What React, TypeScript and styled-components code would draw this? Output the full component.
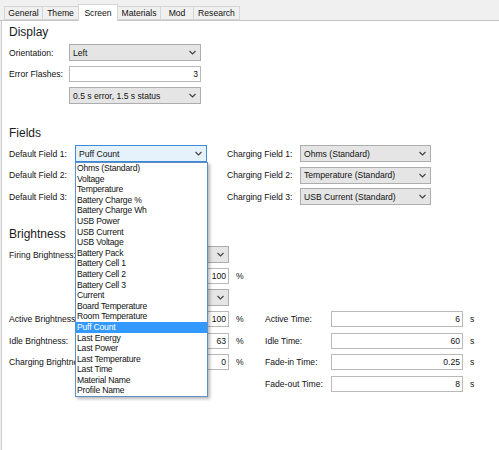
import React from "react";
import styled, { createGlobalStyle } from "styled-components";

const GlobalStyle = createGlobalStyle`
  html, body {
    margin: 0;
    padding: 0;
    background: #f0f0f0;
  }
  body {
    font-family: "Liberation Sans", Arial, sans-serif;
    font-size: 8.6px;
    color: #111;
  }
  * {
    box-sizing: border-box;
  }
`;

const Window = styled.div`
  width: 499px;
  height: 450px;
  display: flex;
  flex-direction: column;
  background: #f0f0f0;
  overflow: hidden;
`;

const TabStrip = styled.div`
  height: 21px;
  flex-shrink: 0;
  display: flex;
  align-items: flex-end;
  padding-left: 4px;
  border-bottom: 1px solid #c4c4c4;
`;

const Tab = styled.div<{ $w: number; $active?: boolean }>`
  position: relative;
  z-index: ${(p) => (p.$active ? 1 : 0)};
  width: ${(p) => p.$w}px;
  height: ${(p) => (p.$active ? 17 : 14)}px;
  margin-bottom: ${(p) => (p.$active ? -1 : 0)}px;
  margin-left: -1px;
  display: flex;
  align-items: center;
  justify-content: center;
  background: ${(p) => (p.$active ? "#fff" : "#f0f0f0")};
  border: 1px solid #d6d6d6;
  border-bottom: ${(p) => (p.$active ? "none" : "1px solid #d6d6d6")};
  white-space: nowrap;
  &:first-child {
    margin-left: 0;
  }
`;

const Panel = styled.div`
  flex: 1;
  margin-left: 1px;
  background: #fff;
  border-left: 1px solid #cdcdcd;
  padding: 4px 0 0 7px;
  display: flex;
  flex-direction: column;
  gap: 22px;
`;

const Section = styled.section`
  display: flex;
  flex-direction: column;
`;

const Heading = styled.div`
  font-size: 12px;
  line-height: 14px;
  height: 14px;
  margin-bottom: 5px;
  color: #1a1a1a;
`;

const Rows = styled.div`
  display: flex;
  flex-direction: column;
  gap: 4.5px;
`;

const FormRow = styled.div<{ $cols: string }>`
  display: grid;
  grid-template-columns: ${(p) => p.$cols};
  height: 17px;
  align-items: center;
`;

const Label = styled.div`
  white-space: nowrap;
  overflow: hidden;
`;

/* left brightness labels run under the open drop-down list */
const CutLabel = styled(Label)`
  max-width: 66px;
`;

const Unit = styled.div`
  padding-left: 7px;
`;

const ComboBox = styled.div<{ $focused?: boolean }>`
  position: relative;
  height: 17px;
  display: flex;
  align-items: center;
  justify-content: space-between;
  padding: 0 4px 0 3px;
  border: 1px solid ${(p) => (p.$focused ? "#3c8ad8" : "#adadad")};
  background: ${(p) => (p.$focused ? "#e5f1fb" : "#e5e5e5")};
  white-space: nowrap;
`;

const TextBox = styled.div`
  height: 16px;
  display: flex;
  align-items: center;
  justify-content: flex-end;
  padding-right: 2px;
  border: 1px solid #b9b9b9;
  background: #fff;
`;

const ListBox = styled.div`
  position: absolute;
  z-index: 10;
  top: calc(100% + 1px);
  left: -1px;
  width: 133px;
  background: #fff;
  border: 1px solid #5f8fc4;
  box-shadow: 2px 2px 3px rgba(0, 0, 0, 0.28);
`;

const ListItem = styled.div<{ $selected?: boolean }>`
  height: 10.6px;
  line-height: 10.6px;
  padding-left: 1px;
  letter-spacing: -0.2px;
  white-space: nowrap;
  background: ${(p) => (p.$selected ? "#3399ff" : "transparent")};
  color: ${(p) => (p.$selected ? "#fff" : "#111")};
`;

const Chevron = () => (
  <svg width="7" height="5" viewBox="0 0 7 5">
    <path d="M0.5 1 L3.5 4 L6.5 1" fill="none" stroke="#404040" strokeWidth="1.1" />
  </svg>
);

const Combo = ({ value, focused, children }: { value?: string; focused?: boolean; children?: React.ReactNode }) => (
  <ComboBox $focused={focused}>
    <span>{value}</span>
    <Chevron />
    {children}
  </ComboBox>
);

const tabs = [
  { name: "General", w: 39 },
  { name: "Theme", w: 37 },
  { name: "Screen", w: 40, active: true },
  { name: "Materials", w: 44 },
  { name: "Mod", w: 34 },
  { name: "Research", w: 47 },
];

const fieldOptions = [
  "Ohms (Standard)",
  "Voltage",
  "Temperature",
  "Battery Charge %",
  "Battery Charge Wh",
  "USB Power",
  "USB Current",
  "USB Voltage",
  "Battery Pack",
  "Battery Cell 1",
  "Battery Cell 2",
  "Battery Cell 3",
  "Current",
  "Board Temperature",
  "Room Temperature",
  "Puff Count",
  "Last Energy",
  "Last Power",
  "Last Temperature",
  "Last Time",
  "Material Name",
  "Profile Name",
];

const displayCols = "60px 132px";
const fieldCols = "66px 132px 20px 73px 131px";
const brightCols = "88px 132px 36px 66px 132px auto";

export default function App() {
  return (
    <>
      <GlobalStyle />
      <Window>
        <TabStrip>
          {tabs.map((t) => (
            <Tab key={t.name} $w={t.w} $active={t.active}>
              {t.name}
            </Tab>
          ))}
        </TabStrip>
        <Panel>
          <Section>
            <Heading>Display</Heading>
            <Rows>
              <FormRow $cols={displayCols}>
                <Label>Orientation:</Label>
                <Combo value="Left" />
              </FormRow>
              <FormRow $cols={displayCols}>
                <Label>Error Flashes:</Label>
                <TextBox>3</TextBox>
              </FormRow>
              <FormRow $cols={displayCols}>
                <span />
                <Combo value="0.5 s error, 1.5 s status" />
              </FormRow>
            </Rows>
          </Section>

          <Section>
            <Heading>Fields</Heading>
            <Rows>
              <FormRow $cols={fieldCols}>
                <Label>Default Field 1:</Label>
                <Combo value="Puff Count" focused>
                  <ListBox>
                    {fieldOptions.map((o) => (
                      <ListItem key={o} $selected={o === "Puff Count"}>
                        {o}
                      </ListItem>
                    ))}
                  </ListBox>
                </Combo>
                <span />
                <Label>Charging Field 1:</Label>
                <Combo value="Ohms (Standard)" />
              </FormRow>
              <FormRow $cols={fieldCols}>
                <Label>Default Field 2:</Label>
                <Combo />
                <span />
                <Label>Charging Field 2:</Label>
                <Combo value="Temperature (Standard)" />
              </FormRow>
              <FormRow $cols={fieldCols}>
                <Label>Default Field 3:</Label>
                <Combo />
                <span />
                <Label>Charging Field 3:</Label>
                <Combo value="USB Current (Standard)" />
              </FormRow>
            </Rows>
          </Section>

          <Section>
            <Heading>Brightness</Heading>
            <Rows>
              <FormRow $cols={brightCols}>
                <CutLabel>Firing Brightness:</CutLabel>
                <Combo />
              </FormRow>
              <FormRow $cols={brightCols}>
                <span />
                <TextBox>100</TextBox>
                <Unit>%</Unit>
              </FormRow>
              <FormRow $cols={brightCols}>
                <span />
                <Combo />
              </FormRow>
              <FormRow $cols={brightCols}>
                <CutLabel>Active Brightness:</CutLabel>
                <TextBox>100</TextBox>
                <Unit>%</Unit>
                <Label>Active Time:</Label>
                <TextBox>6</TextBox>
                <Unit>s</Unit>
              </FormRow>
              <FormRow $cols={brightCols}>
                <CutLabel>Idle Brightness:</CutLabel>
                <TextBox>63</TextBox>
                <Unit>%</Unit>
                <Label>Idle Time:</Label>
                <TextBox>60</TextBox>
                <Unit>s</Unit>
              </FormRow>
              <FormRow $cols={brightCols}>
                <CutLabel>Charging Brightness:</CutLabel>
                <TextBox>0</TextBox>
                <Unit>%</Unit>
                <Label>Fade-in Time:</Label>
                <TextBox>0.25</TextBox>
                <Unit>s</Unit>
              </FormRow>
              <FormRow $cols={brightCols}>
                <span />
                <span />
                <span />
                <Label>Fade-out Time:</Label>
                <TextBox>8</TextBox>
                <Unit>s</Unit>
              </FormRow>
            </Rows>
          </Section>
        </Panel>
      </Window>
    </>
  );
}
